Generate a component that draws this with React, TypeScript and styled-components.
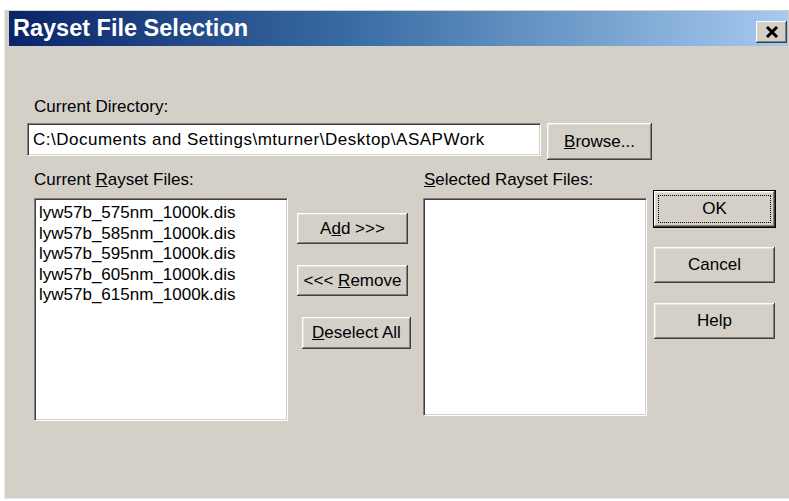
import React, { FC, ReactNode } from 'react'
import styled, { createGlobalStyle } from 'styled-components'

const GlobalStyle = createGlobalStyle`
	html, body {
		margin: 0;
		padding: 0;
		background: #ffffff;
	}
	body {
		font-family: 'Liberation Sans', Arial, sans-serif;
		font-size: 17px;
		color: #000000;
	}
`

const face = '#d4d0c8'

const Window = styled.div`
	box-sizing: border-box;
	width: 785px;
	height: 489px;
	margin: 10px 0 0 4px;
	padding: 1px 1px 0 4px;
	display: flex;
	flex-direction: column;
	background: ${face};
	border-left: 1px solid #ebe9e4;
	border-bottom: 1px solid #eceae5;
`

const TitleBar = styled.div`
	height: 35px;
	display: flex;
	align-items: flex-start;
	justify-content: space-between;
	padding: 0 1px 0 4px;
	background: linear-gradient(to right, #0a246a 0%, #3a6ea5 45%, #a6caf0 100%);
`

const TitleText = styled.span`
	align-self: center;
	color: #ffffff;
	font-weight: bold;
	font-size: 23.5px;
`

const CloseButton = styled.button`
	box-sizing: border-box;
	width: 31px;
	height: 22px;
	margin-top: 10px;
	padding: 0;
	border: none;
	display: flex;
	align-items: center;
	justify-content: center;
	background: ${face};
	box-shadow: inset -1px -1px #404040, inset 1px 1px #ffffff, inset -2px -2px #808080;
`

const Body = styled.div`
	flex: 1;
	display: flex;
	flex-direction: column;
	padding: 51px 0 0 18px;
`

const Label = styled.div<{ $indent?: number }>`
	height: 20px;
	line-height: 20px;
	margin-left: ${({ $indent }) => $indent ?? 0}px;
	white-space: nowrap;
`

const DirRow = styled.div`
	display: flex;
	align-items: flex-start;
	gap: 6px;
	margin-top: 6px;
`

const Sunken = styled.div`
	box-sizing: border-box;
	background: #ffffff;
	border-top: 1px solid #808080;
	border-left: 1px solid #808080;
	border-right: 1px solid #ffffff;
	border-bottom: 1px solid #ffffff;
	box-shadow: inset 1px 1px #404040, inset -1px -1px ${face};
`

const DirInput = styled(Sunken)`
	width: 514px;
	height: 33px;
	padding: 0 5px;
	line-height: 31px;
	letter-spacing: 0.5px;
	white-space: nowrap;
	overflow: hidden;
`

const ListBox = styled(Sunken)<{ $w: number; $h: number }>`
	width: ${({ $w }) => $w}px;
	height: ${({ $h }) => $h}px;
	padding: 4px 4px;
`

const ListItem = styled.div`
	height: 20.5px;
	line-height: 20px;
	white-space: nowrap;
`

const Button = styled.button<{ $w: number; $h: number; $shift?: number }>`
	position: relative;
	box-sizing: border-box;
	width: ${({ $w }) => $w}px;
	height: ${({ $h }) => $h}px;
	margin-left: ${({ $shift }) => $shift ?? 0}px;
	padding: 0;
	border: none;
	background: ${face};
	font-family: 'Liberation Sans', Arial, sans-serif;
	font-size: 17px;
	color: #000000;
	box-shadow: inset -1px -1px #404040, inset 1px 1px #ffffff, inset -2px -2px #808080, inset 2px 2px #e4e2dc;
`

const DefaultButton = styled(Button)`
	box-shadow: 0 0 0 1px #000000, inset -1px -1px #404040, inset 1px 1px #ffffff, inset -2px -2px #808080,
		inset 2px 2px #e4e2dc;
	&::after {
		content: '';
		position: absolute;
		inset: 4px;
		border: 1px dotted #000000;
	}
`

const Lower = styled.div`
	display: flex;
	align-items: flex-start;
	margin-top: 10px;
`

const Column = styled.div<{ $left: number; $top?: number; $gap?: number; $w?: number }>`
	display: flex;
	flex-direction: column;
	align-items: flex-start;
	margin-left: ${({ $left }) => $left}px;
	padding-top: ${({ $top }) => $top ?? 0}px;
	gap: ${({ $gap }) => $gap ?? 8}px;
	${({ $w }) => ($w ? `width: ${$w}px;` : '')}
`

const Key: FC<{ children: ReactNode }> = ({ children }) => <u>{children}</u>

const files = [
	'lyw57b_575nm_1000k.dis',
	'lyw57b_585nm_1000k.dis',
	'lyw57b_595nm_1000k.dis',
	'lyw57b_605nm_1000k.dis',
	'lyw57b_615nm_1000k.dis',
]

const CloseGlyph = () => (
	<svg width="14" height="12" viewBox="0 0 14 12">
		<path d="M2 1 L12 11 M12 1 L2 11" stroke="#000" strokeWidth="3" />
	</svg>
)

const App = () => {
	return (
		<>
			<GlobalStyle />
			<Window>
				<TitleBar>
					<TitleText>Rayset File Selection</TitleText>
					<CloseButton aria-label="Close">
						<CloseGlyph />
					</CloseButton>
				</TitleBar>
				<Body>
					<Label $indent={7}>Current Directory:</Label>
					<DirRow>
						<DirInput>C:\Documents and Settings\mturner\Desktop\ASAPWork</DirInput>
						<Button $w={105} $h={37}>
							<Key>B</Key>rowse...
						</Button>
					</DirRow>
					<Lower>
						<Column $left={7}>
							<Label>
								Current <Key>R</Key>ayset Files:
							</Label>
							<ListBox $w={254} $h={223}>
								{files.map((f) => (
									<ListItem key={f}>{f}</ListItem>
								))}
							</ListBox>
						</Column>
						<Column $left={9} $top={43} $gap={21} $w={114}>
							<Button $w={111} $h={31}>
								A<Key>d</Key>d &gt;&gt;&gt;
							</Button>
							<Button $w={111} $h={31}>
								&lt;&lt;&lt; <Key>R</Key>emove
							</Button>
							<Button $w={109} $h={32} $shift={5}>
								<Key>D</Key>eselect All
							</Button>
						</Column>
						<Column $left={12}>
							<Label $indent={1}>
								<Key>S</Key>elected Rayset Files:
							</Label>
							<ListBox $w={224} $h={218} />
						</Column>
						<Column $left={7} $top={21} $gap={20}>
							<DefaultButton $w={121} $h={36}>
								OK
							</DefaultButton>
							<Button $w={121} $h={36}>
								Cancel
							</Button>
							<Button $w={121} $h={36}>
								Help
							</Button>
						</Column>
					</Lower>
				</Body>
			</Window>
		</>
	)
}

export default App
